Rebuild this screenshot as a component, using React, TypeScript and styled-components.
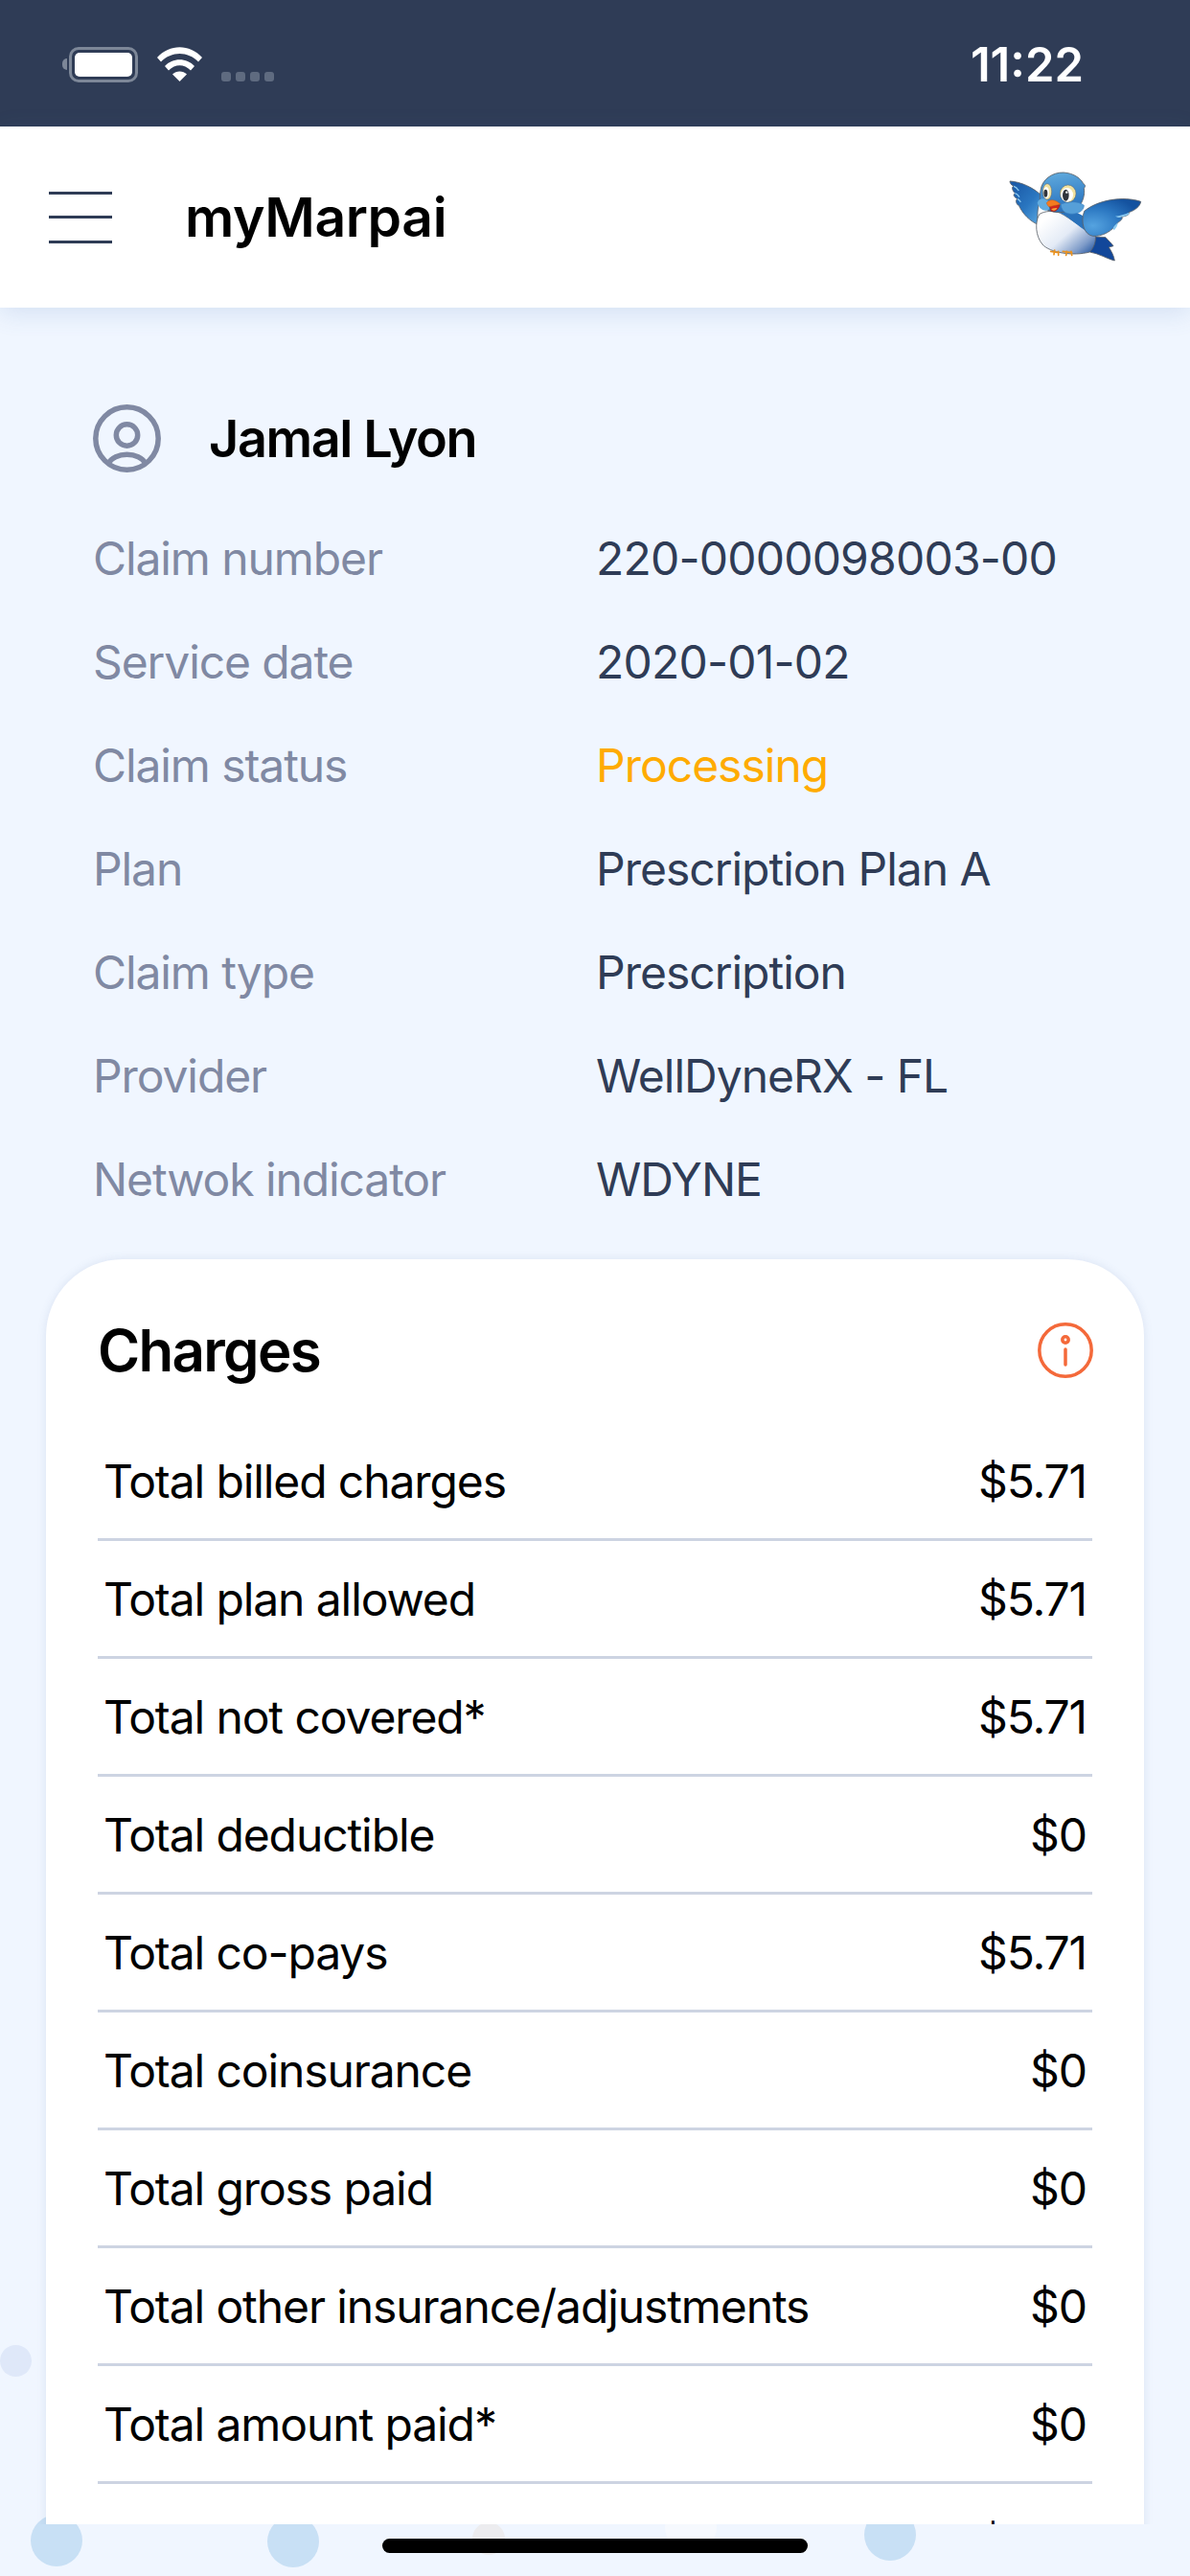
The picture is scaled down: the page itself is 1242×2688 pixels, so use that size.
import styled, { createGlobalStyle } from "styled-components";

const GlobalStyle = createGlobalStyle`
  html, body {
    margin: 0;
    padding: 0;
    background: #f0f6ff;
  }
  * {
    box-sizing: border-box;
  }
`;

const claimRows = [
  { label: "Claim number", value: "220-0000098003-00", numeric: true },
  { label: "Service date", value: "2020-01-02", numeric: true },
  { label: "Claim status", value: "Processing", pending: true },
  { label: "Plan", value: "Prescription Plan A" },
  { label: "Claim type", value: "Prescription" },
  { label: "Provider", value: "WellDyneRX - FL" },
  { label: "Netwok indicator", value: "WDYNE" },
];

const chargeRows = [
  { label: "Total billed charges", amount: "$5.71" },
  { label: "Total plan allowed", amount: "$5.71" },
  { label: "Total not covered*", amount: "$5.71" },
  { label: "Total deductible", amount: "$0" },
  { label: "Total co-pays", amount: "$5.71" },
  { label: "Total coinsurance", amount: "$0" },
  { label: "Total gross paid", amount: "$0" },
  { label: "Total other insurance/adjustments", amount: "$0" },
  { label: "Total amount paid*", amount: "$0" },
  { label: "", amount: "$5.71" },
];

const bubbles = [
  { x: 32, y: 2624, size: 54, tint: "#c8e0f5" },
  { x: 279, y: 2625, size: 54, tint: "#c8e0f5" },
  { x: 493, y: 2632, size: 34, tint: "#ececef" },
  { x: 694, y: 2610, size: 54, tint: "#f6f9fe" },
  { x: 902, y: 2618, size: 54, tint: "#c8e0f5" },
  { x: 0, y: 2447, size: 33, tint: "#dfe8f9" },
];

const Bird = () => (
  <BirdSvg viewBox="0 0 435 300" aria-hidden="true">
    <defs>
      <linearGradient id="leftWing" x1="0.1" y1="0.1" x2="0.8" y2="0.9">
        <stop offset="0" stopColor="#1b5ba8" />
        <stop offset="0.6" stopColor="#2a76c0" />
        <stop offset="1" stopColor="#4d9ad8" />
      </linearGradient>
      <radialGradient id="rightWing" cx="0.18" cy="0.72" r="0.85">
        <stop offset="0" stopColor="#55a3e0" />
        <stop offset="0.55" stopColor="#2c78c2" />
        <stop offset="1" stopColor="#14529f" />
      </radialGradient>
      <linearGradient id="head" x1="0.4" y1="0" x2="0.6" y2="1">
        <stop offset="0" stopColor="#5fa9dc" />
        <stop offset="0.7" stopColor="#357fc6" />
        <stop offset="1" stopColor="#2a6fb8" />
      </linearGradient>
      <linearGradient id="belly" x1="0.1" y1="0.25" x2="0.95" y2="0.95">
        <stop offset="0" stopColor="#ffffff" />
        <stop offset="0.45" stopColor="#e4ebf6" />
        <stop offset="0.8" stopColor="#7f9cc9" />
        <stop offset="1" stopColor="#2f5fa6" />
      </linearGradient>
    </defs>
    <g stroke="#5a6068" strokeWidth="2.5" strokeLinejoin="round">
      <path
        d="M270 215 L312 218 C320 228 330 236 336 245 L322 249 C330 262 338 276 340 291 C318 286 290 268 262 264 Z"
        fill="#12479a"
      />
      <path
        d="M12 42 C46 44 86 62 112 88 C100 110 96 145 100 178 C76 168 52 145 40 118 L36 116 C30 108 30 100 36 98 C26 92 20 86 28 80 C20 72 16 60 24 58 C16 54 12 48 12 42 Z"
        fill="url(#leftWing)"
      />
      <path
        d="M104 146 C90 172 92 214 114 240 C136 266 210 278 262 264 C276 250 282 230 280 210 C240 190 200 158 170 142 C150 134 122 134 104 146 Z"
        fill="url(#belly)"
      />
      <path
        d="M166 140 C196 152 224 184 264 206 L240 150 L200 130 Z"
        fill="#2a72bb"
        stroke="none"
      />
      <path
        d="M108 72 C112 36 146 14 180 15 C214 17 236 36 242 50 C248 52 250 60 244 64 C248 84 240 110 226 124 C190 146 130 146 108 116 C104 100 106 84 108 72 Z"
        fill="url(#head)"
      />
      <path
        d="M245 136 C288 100 368 88 422 106 C420 122 402 134 384 140 C390 146 374 152 362 154 C368 160 356 168 350 172 C332 200 300 216 272 214 C244 210 232 170 245 136 Z"
        fill="url(#rightWing)"
      />
    </g>
    <path
      d="M385 140 C372 146 356 150 342 152 C350 156 356 158 362 154 C372 152 390 146 385 140 Z M350 172 C342 180 330 188 338 196 C344 190 350 182 350 172 Z"
      fill="#8ccaf0"
    />
    <path
      d="M24 58 C32 60 36 66 40 72 M28 80 C34 82 38 86 42 92 M36 98 C40 100 44 104 46 108"
      stroke="#8ccaf0"
      strokeWidth="4"
      fill="none"
    />
    <path
      d="M98 110 C104 94 122 94 132 104 L136 130 C122 140 104 130 98 110 Z"
      fill="#62ace0"
    />
    <path
      d="M172 114 C190 106 226 102 244 118 C244 136 222 148 198 144 C182 142 172 130 172 114 Z"
      fill="#569fd8"
      stroke="#3a7ebf"
      strokeWidth="2"
    />
    <ellipse cx="129" cy="75" rx="14" ry="25" fill="#f1e2a0" stroke="#5a6068" strokeWidth="1.5" />
    <ellipse cx="126" cy="78" rx="9" ry="18" fill="#fff" />
    <ellipse cx="124" cy="80" rx="6" ry="12" fill="#30353c" />
    <ellipse cx="194" cy="81" rx="25" ry="27" fill="#f1e2a0" stroke="#5a6068" strokeWidth="1.5" />
    <ellipse cx="191" cy="85" rx="19" ry="22" fill="#fff" />
    <ellipse cx="187" cy="86" rx="10" ry="18" fill="#30353c" />
    <circle cx="190" cy="77" r="3.5" fill="#fff" />
    <path
      d="M136 118 L168 116 C166 132 150 142 140 134 Z"
      fill="#d2261c"
      stroke="#7e2418"
      strokeWidth="1.5"
    />
    <path d="M142 130 C148 126 156 126 160 126 C156 134 148 138 142 130 Z" fill="#f6a23c" />
    <path
      d="M127 110 C136 98 152 98 170 114 C156 118 144 120 134 122 C130 118 128 114 127 110 Z"
      fill="#f47b20"
      stroke="#c85d12"
      strokeWidth="1.5"
    />
    <g stroke="#e99220" strokeWidth="5" strokeLinecap="round" fill="none">
      <path d="M140 262 L165 266 M152 258 L150 272 M164 262 L164 274" />
      <path d="M178 262 L206 266 M190 262 L188 274 M204 262 L206 274" />
    </g>
  </BirdSvg>
);

export default function App() {
  return (
    <Page>
      <GlobalStyle />
      {bubbles.map((b) => (
        <Bubble key={b.x} $x={b.x} $y={b.y} $size={b.size} $tint={b.tint} />
      ))}

      <StatusBar>
        <StatusIcons>
          <BatteryNub />
          <Battery>
            <BatteryFill />
          </Battery>
          <WifiSvg viewBox="0 0 47 36" aria-hidden="true">
            <path d="M0 11 C13 -3.5 34 -3.5 47 11 L43 15.5 C32 4 15 4 4 15.5 Z" />
            <path d="M8 20 C16 11 31 11 39 20 L35 24.5 C28 17.5 19 17.5 12 24.5 Z" />
            <path d="M16 28.5 C20 24.5 27 24.5 31 28.5 L23.5 36 Z" />
          </WifiSvg>
          <SignalDots>
            <SignalDot />
            <SignalDot />
            <SignalDot />
            <SignalDot />
          </SignalDots>
        </StatusIcons>
        <Clock>11:22</Clock>
      </StatusBar>

      <Header>
        <MenuButton aria-label="Menu">
          <MenuLine />
          <MenuLine />
          <MenuLine />
        </MenuButton>
        <AppTitle>myMarpai</AppTitle>
        <Bird />
      </Header>

      <Main>
        <Member>
          <PersonSvg viewBox="0 0 71 71" aria-hidden="true">
            <circle cx="35.5" cy="35.5" r="32.7" />
            <circle cx="35.5" cy="32" r="11.2" />
            <path d="M16 62 C22 49 49 49 55 62" />
          </PersonSvg>
          <MemberName>Jamal Lyon</MemberName>
        </Member>

        <ClaimList>
          {claimRows.map((row) => (
            <ClaimRow key={row.label}>
              <ClaimLabel>{row.label}</ClaimLabel>
              <ClaimValue $pending={row.pending} $numeric={row.numeric}>
                {row.value}
              </ClaimValue>
            </ClaimRow>
          ))}
        </ClaimList>

        <Card>
          <CardHead>
            <CardTitle>Charges</CardTitle>
            <InfoSvg viewBox="0 0 58 58" aria-hidden="true">
              <circle cx="29" cy="29" r="27.2" />
              <circle cx="29" cy="18" r="3.2" />
              <path d="M29 28 V44" />
            </InfoSvg>
          </CardHead>
          {chargeRows.map((row, i) => (
            <ChargeRow key={i}>
              <span>{row.label}</span>
              <span>{row.amount}</span>
            </ChargeRow>
          ))}
        </Card>
      </Main>

      <HomeIndicator />
    </Page>
  );
}

const Page = styled.div`
  position: relative;
  width: 1242px;
  height: 2688px;
  overflow: hidden;
  background: #f0f6ff;
  font-family: Inter, "Liberation Sans", sans-serif;
`;

const Bubble = styled.div<{ $x: number; $y: number; $size: number; $tint: string }>`
  position: absolute;
  left: ${({ $x }) => $x}px;
  top: ${({ $y }) => $y}px;
  width: ${({ $size }) => $size}px;
  height: ${({ $size }) => $size}px;
  border-radius: 50%;
  background: ${({ $tint }) => $tint};
`;

const StatusBar = styled.div`
  height: 132px;
  padding: 49px 111px 0 65px;
  display: flex;
  justify-content: space-between;
  background: #2f3c56;
`;

const StatusIcons = styled.div`
  display: flex;
  align-items: flex-start;
`;

const BatteryNub = styled.div`
  width: 5px;
  height: 12px;
  margin: 12px 2px 0 0;
  border-radius: 5px 0 0 5px;
  background: #7d8798;
`;

const Battery = styled.div`
  width: 72px;
  height: 37px;
  padding: 3px;
  border: 3px solid #7d8798;
  border-radius: 10px;
`;

const BatteryFill = styled.div`
  height: 100%;
  border-radius: 5px;
  background: #fff;
`;

const WifiSvg = styled.svg`
  width: 47px;
  height: 36px;
  margin-left: 20px;
  fill: #fff;
`;

const SignalDots = styled.div`
  display: flex;
  gap: 5px;
  margin: 26px 0 0 20px;
`;

const SignalDot = styled.div`
  width: 10px;
  height: 10px;
  border-radius: 3px;
  background: #5f6b80;
`;

const Clock = styled.div`
  font-size: 49px;
  font-weight: 600;
  line-height: 38px;
  color: #fff;
`;

const Header = styled.header`
  position: relative;
  z-index: 2;
  height: 189px;
  padding: 0 47px 0 51px;
  display: flex;
  align-items: center;
  background: #fff;
  box-shadow: 0 6px 24px rgba(70, 120, 180, 0.16);
`;

const MenuButton = styled.div`
  width: 66px;
  height: 54px;
  display: flex;
  flex-direction: column;
  justify-content: space-between;
`;

const MenuLine = styled.span`
  height: 3px;
  background: #2f3c56;
`;

const AppTitle = styled.h1`
  margin: 0 0 0 76px;
  flex: 1;
  font-size: 57px;
  font-weight: 600;
  letter-spacing: -0.4px;
  color: #000;
`;

const BirdSvg = styled.svg`
  width: 145px;
  height: 100px;
  margin-top: -3px;
`;

const Main = styled.main`
  position: relative;
  z-index: 1;
  height: 2313px;
  overflow: hidden;
  padding-top: 101px;
`;

const Member = styled.div`
  height: 71px;
  margin: 0 0 35px 97px;
  display: flex;
  align-items: center;
  gap: 50px;
`;

const PersonSvg = styled.svg`
  width: 71px;
  height: 71px;
  fill: none;
  stroke: #8089a3;
  stroke-width: 5.5;
`;

const MemberName = styled.div`
  font-size: 54px;
  font-weight: 600;
  letter-spacing: -1.4px;
  color: #000;
`;

const ClaimList = styled.div`
  padding-left: 97px;
`;

const ClaimRow = styled.div`
  height: 108px;
  display: grid;
  grid-template-columns: 525px 1fr;
  align-items: center;
  font-size: 48px;
`;

const ClaimLabel = styled.span`
  letter-spacing: -1.1px;
  color: #8089a3;
`;

const ClaimValue = styled.span<{ $pending?: boolean; $numeric?: boolean }>`
  letter-spacing: ${({ $numeric }) => ($numeric ? "-0.8px" : "-1px")};
  color: ${({ $pending }) => ($pending ? "#ffab00" : "#2f3c56")};
`;

const Card = styled.section`
  margin: 30px 48px 0;
  padding: 66px 54px 0;
  border-radius: 80px 80px 0 0;
  background: #fff;
  box-shadow: 0 0 10px rgba(90, 110, 160, 0.14);
`;

const CardHead = styled.div`
  height: 58px;
  margin-bottom: 47px;
  display: flex;
  align-items: center;
  justify-content: space-between;
`;

const CardTitle = styled.h2`
  margin: 0;
  font-size: 60px;
  font-weight: 600;
  letter-spacing: -1.7px;
  color: #000;
`;

const InfoSvg = styled.svg`
  width: 58px;
  height: 58px;
  margin-right: -1px;
  fill: none;
  stroke: #f4693a;
  stroke-width: 3.5;
  stroke-linecap: round;
`;

const ChargeRow = styled.div`
  height: 123px;
  padding: 0 6px;
  display: flex;
  align-items: center;
  justify-content: space-between;
  border-bottom: 3px solid #cdd4e2;
  font-size: 48px;
  letter-spacing: -1.1px;
  color: #000;
`;

const HomeIndicator = styled.div`
  position: absolute;
  z-index: 3;
  left: 399px;
  top: 2649px;
  width: 444px;
  height: 15px;
  border-radius: 8px;
  background: #000;
`;
